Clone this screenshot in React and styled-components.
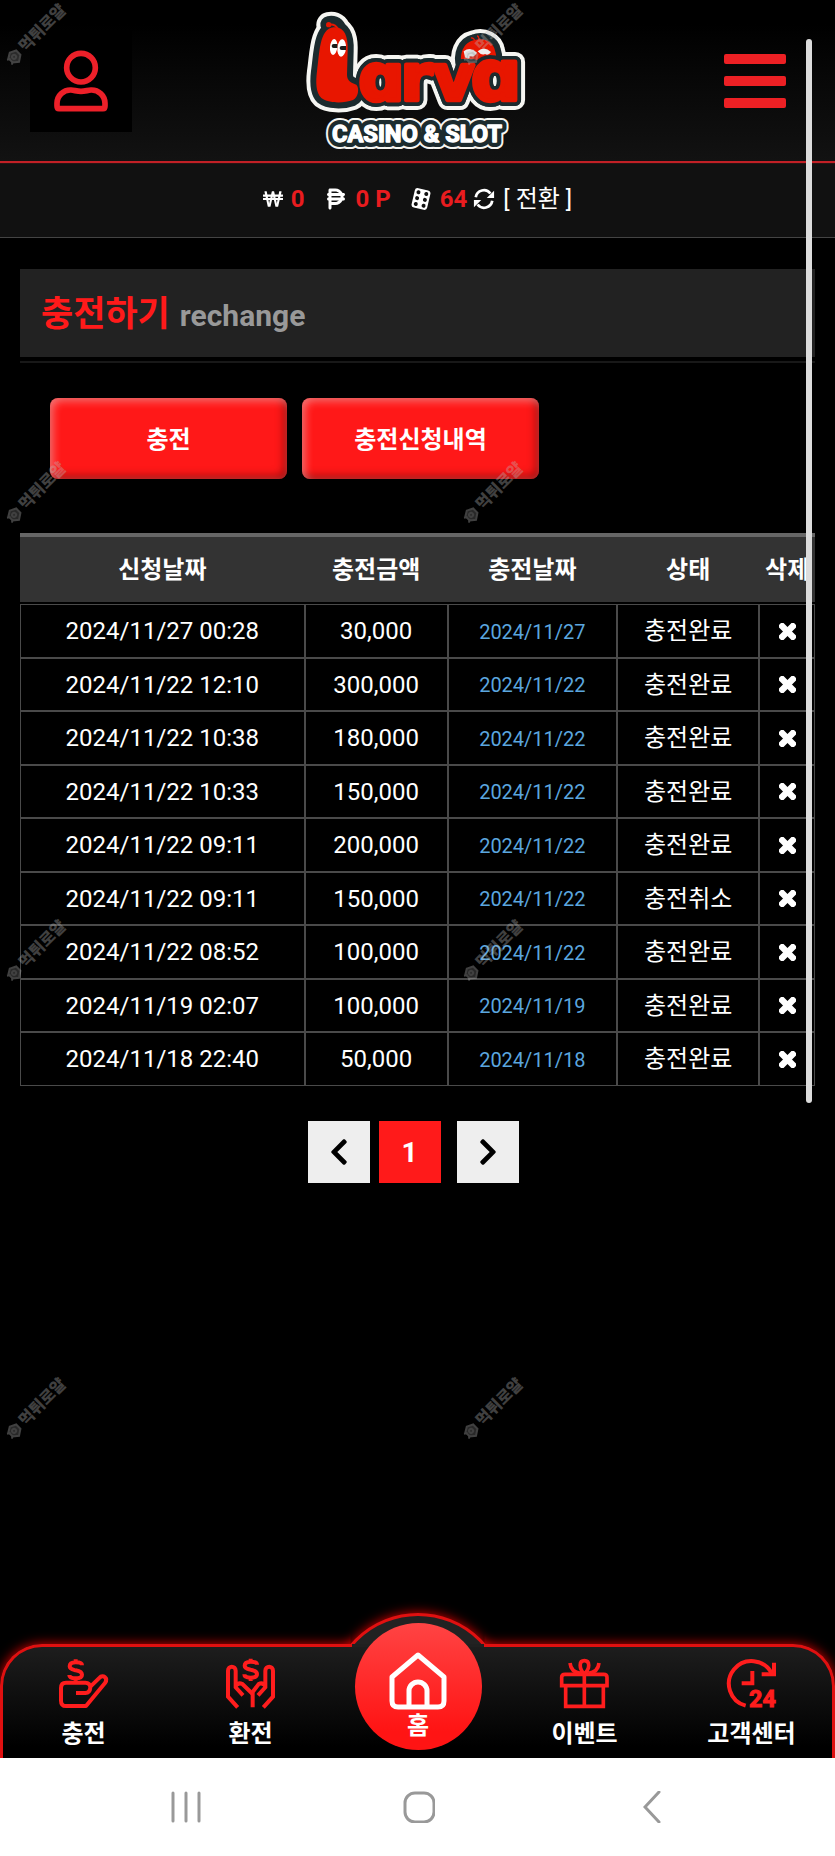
import React from 'react';
import styled, { createGlobalStyle } from 'styled-components';
import { FaWonSign, FaChevronLeft, FaChevronRight } from 'react-icons/fa';
import { FaPesoSign } from 'react-icons/fa6';

const GlobalStyle = createGlobalStyle`
  *, *::before, *::after { box-sizing: border-box; }
  body {
    margin: 0;
    background: #000;
    color: #fff;
    font-family: Roboto, "Noto Sans CJK KR", sans-serif;
    font-size: 24px;
  }
  button { font: inherit; color: inherit; border: 0; padding: 0; cursor: pointer; }
  a { color: inherit; text-decoration: none; }
  svg { display: block; flex: none; }
`;

const Screen = styled.div`
  position: relative;
  display: flex;
  flex-direction: column;
  min-height: 100vh;
  overflow: hidden;
`;

const Header = styled.header`
  display: grid;
  grid-template-columns: 1fr auto 1fr;
  align-items: center;
  height: 163px;
  padding: 0 49px 0 30px;
  background: linear-gradient(#000 15%, #121212);
  border-bottom: 2px solid #c12026;
`;

const ProfileButton = styled.button`
  display: flex;
  align-items: center;
  justify-content: center;
  width: 102px;
  height: 102px;
  background: #000;
`;

const LogoLink = styled.a`
  padding-left: 18px;
`;

const MenuButton = styled.button`
  display: flex;
  flex-direction: column;
  justify-content: space-between;
  justify-self: end;
  width: 62px;
  height: 54px;
  background: none;

  span {
    height: 10px;
    border-radius: 2px;
    background: #ed2024;
  }
`;

const StatusBar = styled.div`
  display: flex;
  align-items: center;
  justify-content: center;
  height: 75px;
  padding-bottom: 4px;
  background: #111;
  border-top: 1px solid #2a1212;
  border-bottom: 1px solid #444;
  line-height: 32px;
`;

const Balance = styled.span`
  display: flex;
  align-items: center;
  gap: 8px;
  margin-right: ${(p) => (p.$tight ? '6px' : '19px')};

  b { color: #e91c1f; }
`;

const ConvertButton = styled.button`
  display: flex;
  align-items: center;
  gap: 8px;
  background: none;
`;

const Main = styled.main`
  flex: 1;
  padding: 31px 20px 40px;
`;

const TitlePanel = styled.div`
  display: flex;
  align-items: baseline;
  gap: 10px;
  height: 88px;
  padding: 22px 21px 0;
  background: #222;
  line-height: 48px;
`;

const TitleRule = styled.div`
  margin-top: 4px;
  height: 2px;
  background: #181818;
`;

const Title = styled.h1`
  margin: 0;
  font-size: 35px;
  line-height: 48px;
  color: #ff1a1a;
`;

const Subtitle = styled.span`
  font-size: 30px;
  font-weight: 700;
  color: #999;
`;

const Tabs = styled.div`
  display: flex;
  gap: 15px;
  padding: 35px 30px 54px;
`;

const TabButton = styled.button`
  flex: 0 1 237px;
  height: 81px;
  padding-bottom: 2px;
  border-radius: 8px;
  background: #ff1818;
  box-shadow:
    inset 3px 3px 8px rgba(255, 255, 255, 0.4),
    inset -3px -3px 8px rgba(60, 0, 0, 0.5);
  font-weight: 700;
`;

const HistoryTable = styled.table`
  width: 100%;
  table-layout: fixed;
  border-spacing: 0;
  line-height: 32px;
  text-align: center;

  thead tr { height: 71px; }

  th {
    padding: 0;
    background: #333;
    border-top: 4px solid #666;
    border-bottom: 2px solid #000;
    font-weight: 700;
    white-space: nowrap;
  }

  tbody tr { height: 54px; }
  tbody tr:nth-child(even) { height: 53px; }

  td {
    padding: 0;
    border: 1px solid #4a4a4a;
    white-space: nowrap;
  }
`;

const HeadCell = styled.th`
  width: ${(p) => p.$width};
`;

const DoneDate = styled.span`
  font-size: 20px;
  color: #5ba6df;
`;

const DeleteButton = styled.button`
  display: block;
  margin: 0 auto;
  background: none;
`;

const Pager = styled.nav`
  display: flex;
  justify-content: center;
  gap: 9px;
  margin-top: 35px;
  padding-right: 9px;
`;

const PageButton = styled.button`
  display: flex;
  align-items: center;
  justify-content: center;
  width: 62px;
  height: 62px;
  background: ${(p) => (p.$active ? '#ff1a1a' : '#eee')};
  color: ${(p) => (p.$active ? '#fff' : '#000')};
  font-size: 28px;
  font-weight: 700;
  margin-right: ${(p) => (p.$active ? '7px' : '0')};
`;

const Dock = styled.div`
  position: relative;
`;

const DockBump = styled.div`
  position: absolute;
  top: -31px;
  left: 50%;
  width: 178px;
  height: 178px;
  margin-left: -89px;
  border: 3px solid #e01010;
  border-radius: 50%;
  background: #222;
  box-shadow: 0 0 12px #d00;
  clip-path: inset(-30px -30px 100px -30px);
`;

const DockBar = styled.nav`
  position: relative;
  display: grid;
  grid-template-columns: repeat(5, 1fr);
  height: 114px;
  background: linear-gradient(#1e1e1e, #000 90%);
  border-radius: 42px 42px 0 0;
  box-shadow: inset 0 0 0 3px #e01010, 0 0 12px #d00;
  clip-path: polygon(
    0 -30px,
    calc(50% - 67px) -30px,
    calc(50% - 67px) 0,
    calc(50% + 67px) 0,
    calc(50% + 67px) -30px,
    100% -30px,
    100% 100%,
    0 100%
  );

  &::before {
    content: '';
    position: absolute;
    top: 0;
    left: 50%;
    width: 132px;
    height: 3px;
    margin-left: -66px;
    background: #202020;
  }

  &::after {
    content: '';
    position: absolute;
    left: 3px;
    right: 3px;
    bottom: 0;
    height: 3px;
    background: #000;
  }
`;

const DockItem = styled.a`
  display: flex;
  flex-direction: column;
  align-items: center;
  gap: 10px;
  padding-top: 15px;
  color: #fff;
  font-weight: 700;
  line-height: 32px;
  white-space: nowrap;
`;

const HomeLink = styled.a`
  position: absolute;
  top: -21px;
  left: 50%;
  display: flex;
  flex-direction: column;
  align-items: center;
  width: 127px;
  height: 127px;
  margin-left: -63px;
  padding-top: 29px;
  border-radius: 50%;
  background: linear-gradient(#ff4444, #ff1414 85%);
  font-size: 24px;
  font-weight: 700;
  line-height: 32px;
`;

const SystemBar = styled.div`
  position: relative;
  display: flex;
  justify-content: center;
  height: 98px;
  padding: 16px 0 0 3px;
  background: #fff;
`;

const SystemButton = styled.button`
  display: flex;
  align-items: center;
  justify-content: center;
  width: 28%;
  height: 66px;
  background: none;
`;

const ScrollThumb = styled.div`
  position: absolute;
  top: 39px;
  right: 23px;
  width: 6px;
  height: 1064px;
  border-radius: 3px;
  background: #dcdcdc;
`;

const WatermarkLayer = styled.div`
  position: absolute;
  inset: 0 0 98px;
  display: grid;
  grid-template-columns: 457px 1fr;
  grid-auto-rows: 458px;
  overflow: hidden;
  pointer-events: none;
`;

const Watermark = styled.div`
  display: flex;
  align-items: center;
  justify-content: center;
  width: 72px;
  height: 70px;
  opacity: 0.34;

  div {
    display: flex;
    align-items: center;
    gap: 2px;
    color: #bbb;
    font-size: 16px;
    font-weight: 900;
    line-height: 20px;
    white-space: nowrap;
    transform: rotate(-45deg);
  }
`;

const Stroke = ({ children, box, size = 49, width = 10, color = '#ff1d1d', ...rest }) => (
  <svg
    viewBox={box}
    width={size}
    height={size}
    fill="none"
    stroke={color}
    strokeWidth={width}
    overflow="visible"
    {...rest}
  >
    {children}
  </svg>
);

const UserIcon = () => (
  <svg width="54" height="62" viewBox="162 153 162 184" fill="none" stroke="#ed2029" strokeWidth="17">
    <circle cx="243" cy="205" r="43" />
    <path d="M177 328 H309 Q315 328 315 320 V312 C315 288 295 271 273 272 C262 273 255 276 243 276 C231 276 224 273 213 272 C191 271 171 288 171 312 V320 Q171 328 177 328 Z" />
  </svg>
);

const wormBody =
  'M136 80 C166 76 180 104 178 150 L176 222 C176 242 190 246 204 252 C214 262 210 290 194 298 C164 309 120 308 99 292 C82 276 82 244 86 212 C94 160 92 84 136 80 Z';
const antenna = 'M148 84 C142 72 132 70 122 72';
const friend =
  'M522 200 C510 160 526 126 556 119 C586 108 616 124 620 150 C626 168 624 186 620 200 Z';

const LogoShapes = ({ color, width }) => (
  <g fill={color} stroke={color} strokeWidth={width} strokeLinejoin="round" strokeLinecap="round">
    <path d={wormBody} />
    <path d={antenna} fill="none" strokeWidth={width + 16} />
    <path d={friend} />
    <use href="#logo-name" />
  </g>
);

const Logo = () => (
  <svg width="224" height="141" viewBox="50 28 672 423" role="img" aria-label="Larva Casino & Slot">
    <defs>
      <text
        id="logo-name"
        y="298"
        fontFamily='"DejaVu Sans", sans-serif'
        fontWeight="700"
        fontSize="190"
        strokeLinejoin="round"
      >
        <tspan x="211">ɑ</tspan>
        <tspan x="338">r</tspan>
        <tspan x="434">v</tspan>
        <tspan x="549" fontSize="208">ɑ</tspan>
      </text>
      <text
        id="logo-tagline"
        x="386"
        y="423"
        textAnchor="middle"
        fontFamily='"Liberation Sans Narrow", Roboto, sans-serif'
        fontWeight="700"
        fontSize="71"
        strokeLinejoin="round"
      >
        CASINO &amp; SLOT
      </text>
    </defs>
    <LogoShapes color="#f6f6f2" width={60} />
    <LogoShapes color="#1c2b2e" width={36} />
    <path d={friend} fill="#e81600" />
    <path d="M560 122 Q556 110 548 112 M572 120 Q572 106 566 106" stroke="#e81600" strokeWidth="4" fill="none" />
    <use href="#logo-name" fill="#1c2b2e" stroke="#1c2b2e" strokeWidth="36" />
    <path d="M526 152 Q546 136 566 156 Q556 172 544 166 Q546 180 530 170 Z" fill="#eee" />
    <path d="M568 152 Q588 134 608 154 Q600 166 590 160 Q580 166 568 152 Z" fill="#eee" />
    <use href="#logo-name" fill="#e81600" stroke="#e81600" strokeWidth="14" />
    <path d={wormBody} fill="#e81600" />
    <path d={antenna} fill="none" stroke="#e81600" strokeWidth="6" />
    <circle cx="121" cy="72" r="8" fill="#e81600" />
    <ellipse cx="136" cy="139" rx="11" ry="24" fill="#fff" transform="rotate(5 136 139)" />
    <ellipse cx="160" cy="142" rx="13" ry="26" fill="#fff" transform="rotate(5 160 142)" />
    <path d="M136 130 h11 v12 h-11 a6 6 0 0 1 0 -12 Z M160 136 h13 v12 h-13 a6 6 0 0 1 0 -12 Z" fill="#1c1c1c" />
    <use href="#logo-tagline" fill="#f6f6f2" stroke="#f6f6f2" strokeWidth="42" />
    <use href="#logo-tagline" fill="#1c2b2e" stroke="#1c2b2e" strokeWidth="30" />
    <use href="#logo-tagline" fill="#fff" stroke="#fff" strokeWidth="4" />
  </svg>
);

const DiceIcon = () => (
  <svg width="22" height="22" viewBox="0 0 22 22">
    <g transform="rotate(13 11 11)">
      <rect x="3" y="1" width="16" height="20" rx="3" fill="#fff" />
      {[5, 11, 17].map((y) => (
        <g key={y} fill="#111">
          <circle cx="7" cy={y} r="2" />
          <circle cx="15" cy={y} r="2" />
        </g>
      ))}
    </g>
  </svg>
);

const RefreshIcon = () => (
  <svg width="22" height="22" viewBox="0 0 24 22" fill="none" stroke="#fff" strokeWidth="3">
    <path d="M3 9 A9 9 0 0 1 19 5 M21 13 A9 9 0 0 1 5 17" />
    <path d="M23 2 V10 H15 Z M1 20 V12 H9 Z" fill="#fff" stroke="none" />
  </svg>
);

const CrossIcon = () => (
  <svg width="17" height="17" viewBox="0 0 16 16" fill="#fff">
    <g transform="rotate(45 8 8)">
      <rect x="-2" y="5" width="20" height="6" rx="1" />
      <rect x="5" y="-2" width="6" height="20" rx="1" />
    </g>
  </svg>
);

const dollar = (x, y) => (
  <path
    d={`M${x + 19} ${y - 15} C${x + 19} ${y - 23} ${x + 10} ${y - 24} ${x} ${y - 24} C${x - 12} ${y - 24} ${x - 18} ${y - 20} ${x - 18} ${y - 12} C${x - 18} ${y - 3} ${x - 8} ${y - 2} ${x} ${y} C${x + 10} ${y + 2} ${x + 19} ${y + 4} ${x + 19} ${y + 13} C${x + 19} ${y + 21} ${x + 10} ${y + 24} ${x} ${y + 24} C${x - 10} ${y + 24} ${x - 19} ${y + 22} ${x - 19} ${y + 14} M${x} ${y - 33} V${y - 22} M${x} ${y + 22} V${y + 34}`}
  />
);

const DepositIcon = () => (
  <Stroke box="177 177 147 147" width={12}>
    {dollar(227, 211)}
    <path
      strokeLinejoin="round"
      d="M228 279 H256 Q270 278 271 262 Q270 248 256 248 H198 Q183 248 183 264 V302 Q183 318 198 318 H258 L315 249 C326 233 308 223 299 233 L268 263"
    />
  </Stroke>
);

const WithdrawIcon = () => (
  <Stroke box="679 177 147 147" width={12}>
    {dollar(753, 209)}
    <path d="M714 322 L685 290 V212 C685 196 708 196 708 212 V262 L730 286 M708 258 Q716 246 728 252 L759 282" />
    <path d="M791 322 L820 290 V212 C820 196 797 196 797 212 V262 L775 286 M797 258 Q789 246 777 252 L759 276 V322" />
  </Stroke>
);

const GiftIcon = () => (
  <Stroke box="438 177 147 147" width={11}>
    <path d="M443 257 V232 Q443 223 453 223 H569 Q579 223 579 232 V257 Z M455 257 V319 H568 V257 M511 223 V319" />
    <path d="M511 222 C494 205 495 182 511 182 C528 182 529 205 511 222 M468 189 C470 208 480 218 500 220 M555 189 C553 208 543 218 523 220" />
  </Stroke>
);

const SupportIcon = () => (
  <Stroke box="940 177 147 147" width={12}>
    <path d="M996 317 A68 68 0 1 1 1074 220" />
    <path d="M1081 188 V223 H1044 M1016 213 V250 H984" />
    <text x="1006" y="322" fontSize="70" fontWeight="700" fill="#ff1d1d" strokeWidth="3">24</text>
  </Stroke>
);

const HomeIcon = () => (
  <Stroke box="0 0 58 58" size={58} width={5} color="#fff" strokeLinejoin="round">
    <path d="M29 3 L55 25 V49 Q55 55 49 55 H9 Q3 55 3 49 V25 Z" />
    <path d="M20 55 V39 A9 9 0 0 1 38 39 V55" />
  </Stroke>
);

const BadgeIcon = () => (
  <svg width="17" height="17" viewBox="0 0 17 17" fill="none" stroke="#bbb" strokeWidth="2">
    <path d="M8 2 L14 5 V11 L8 15 L3 11 V5 Z" fill="#777" />
    <circle cx="8" cy="8" r="2" />
    <path d="M1 5 L4 7 M1 12 L4 10" />
  </svg>
);

const columns = [
  ['신청날짜', '35.8%'],
  ['충전금액', '18%'],
  ['충전날짜', '21.3%'],
  ['상태', '17.9%'],
  ['삭제', '7%'],
];

const rows = [
  ['2024/11/27 00:28', '30,000', '2024/11/27', '충전완료'],
  ['2024/11/22 12:10', '300,000', '2024/11/22', '충전완료'],
  ['2024/11/22 10:38', '180,000', '2024/11/22', '충전완료'],
  ['2024/11/22 10:33', '150,000', '2024/11/22', '충전완료'],
  ['2024/11/22 09:11', '200,000', '2024/11/22', '충전완료'],
  ['2024/11/22 09:11', '150,000', '2024/11/22', '충전취소'],
  ['2024/11/22 08:52', '100,000', '2024/11/22', '충전완료'],
  ['2024/11/19 02:07', '100,000', '2024/11/19', '충전완료'],
  ['2024/11/18 22:40', '50,000', '2024/11/18', '충전완료'],
];

export default function App() {
  return (
    <Screen>
      <GlobalStyle />
      <Header>
        <ProfileButton aria-label="내 정보">
          <UserIcon />
        </ProfileButton>
        <LogoLink href="#">
          <Logo />
        </LogoLink>
        <MenuButton aria-label="메뉴">
          <span />
          <span />
          <span />
        </MenuButton>
      </Header>

      <StatusBar>
        <Balance>
          <FaWonSign size={20} />
          <b>0</b>
        </Balance>
        <Balance>
          <FaPesoSign size={24} />
          <b>0 P</b>
        </Balance>
        <Balance $tight>
          <DiceIcon />
          <b>64</b>
        </Balance>
        <ConvertButton>
          <RefreshIcon />
          <span>[ 전환 ]</span>
        </ConvertButton>
      </StatusBar>

      <Main>
        <TitlePanel>
          <Title>충전하기</Title>
          <Subtitle>rechange</Subtitle>
        </TitlePanel>
        <TitleRule />

        <Tabs>
          <TabButton>충전</TabButton>
          <TabButton>충전신청내역</TabButton>
        </Tabs>

        <HistoryTable>
          <thead>
            <tr>
              {columns.map(([label, width]) => (
                <HeadCell key={label} $width={width} scope="col">
                  {label}
                </HeadCell>
              ))}
            </tr>
          </thead>
          <tbody>
            {rows.map(([requested, amount, done, state], i) => (
              <tr key={i}>
                <td>{requested}</td>
                <td>{amount}</td>
                <td>
                  <DoneDate>{done}</DoneDate>
                </td>
                <td>{state}</td>
                <td>
                  <DeleteButton aria-label="삭제">
                    <CrossIcon />
                  </DeleteButton>
                </td>
              </tr>
            ))}
          </tbody>
        </HistoryTable>

        <Pager>
          <PageButton aria-label="이전">
            <FaChevronLeft size={30} />
          </PageButton>
          <PageButton $active>1</PageButton>
          <PageButton aria-label="다음">
            <FaChevronRight size={30} />
          </PageButton>
        </Pager>
      </Main>

      <Dock>
        <DockBump />
        <DockBar>
          <DockItem href="#">
            <DepositIcon />
            충전
          </DockItem>
          <DockItem href="#">
            <WithdrawIcon />
            환전
          </DockItem>
          <span />
          <DockItem href="#">
            <GiftIcon />
            이벤트
          </DockItem>
          <DockItem href="#">
            <SupportIcon />
            고객센터
          </DockItem>
        </DockBar>
        <HomeLink href="#">
          <HomeIcon />홈
        </HomeLink>
      </Dock>

      <SystemBar>
        <SystemButton aria-label="최근 앱">
          <svg width="32" height="32" viewBox="0 0 32 32" stroke="#999" strokeWidth="3" strokeLinecap="round">
            <path d="M3 2 V30 M16 2 V30 M29 2 V30" />
          </svg>
        </SystemButton>
        <SystemButton aria-label="홈">
          <svg width="32" height="32" viewBox="0 0 32 32" fill="none" stroke="#999" strokeWidth="3">
            <rect x="2" y="2" width="29" height="29" rx="10" />
          </svg>
        </SystemButton>
        <SystemButton aria-label="뒤로">
          <svg width="18" height="32" viewBox="0 0 18 32" fill="none" stroke="#999" strokeWidth="3" strokeLinecap="round">
            <path d="M16 1 L2 16 L16 31" />
          </svg>
        </SystemButton>
      </SystemBar>

      <ScrollThumb />
      <WatermarkLayer aria-hidden="true">
        {Array.from({ length: 8 }, (_, i) => (
          <Watermark key={i}>
            <div>
              <BadgeIcon />
              먹튀로얄
            </div>
          </Watermark>
        ))}
      </WatermarkLayer>
    </Screen>
  );
}
